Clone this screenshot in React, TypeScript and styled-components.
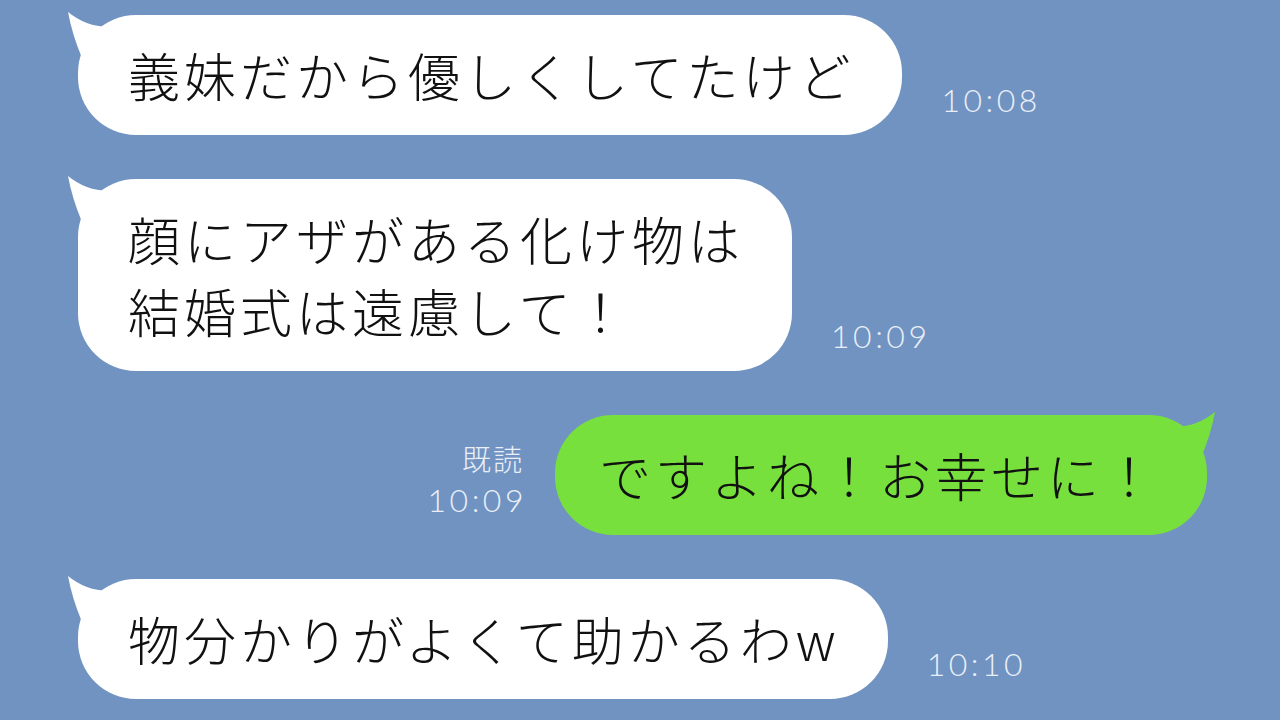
import React from "react";
import styled, { createGlobalStyle } from "styled-components";

const Global = createGlobalStyle`
  html, body {
    margin: 0;
    padding: 0;
    background: #7193c1;
  }
  #root {
    width: 1280px;
    height: 720px;
    overflow: hidden;
  }
`;

const Screen = styled.div`
  width: 1280px;
  height: 720px;
  box-sizing: border-box;
  background: #7193c1;
  padding: 15px 73px 0 78px;
  display: flex;
  flex-direction: column;
  gap: 44px;
`;

const Row = styled.div<{ $mine?: boolean }>`
  display: flex;
  align-items: flex-end;
  justify-content: flex-start;
  flex-direction: ${(p) => (p.$mine ? "row-reverse" : "row")};
  gap: ${(p) => (p.$mine ? "31px" : "39px")};
`;

const Bubble = styled.div<{ $mine?: boolean }>`
  position: relative;
  background: ${(p) => (p.$mine ? "#78e03c" : "#ffffff")};
  border-radius: 58px;
  padding: ${(p) => (p.$mine ? "24px 48px 24px 44px" : "24px 48px 24px 50px")};
  font-family: "Noto Sans CJK JP", "Noto Sans", sans-serif;
  font-weight: 300;
  font-size: 52px;
  letter-spacing: 4px;
  line-height: 72px;
  color: #111;
  white-space: pre;
`;

const Tail = styled.svg<{ $mine?: boolean }>`
  position: absolute;
  top: -5px;
  width: 60px;
  height: 60px;
  overflow: visible;
  ${(p) => (p.$mine ? "right: -10px; transform: scaleX(-1);" : "left: -12px;")}
`;

const Meta = styled.div`
  display: flex;
  flex-direction: column;
  align-items: flex-end;
  margin-bottom: 19px;
  font-family: Lato, "Noto Sans", sans-serif;
  font-weight: 300;
  color: #e9eff8;
`;

const Time = styled.div`
  font-size: 32px;
  line-height: 32px;
  letter-spacing: 3.5px;
  margin-right: -3px;
`;

const Read = styled.div`
  font-family: "Noto Sans CJK JP", sans-serif;
  font-weight: 300;
  font-size: 29px;
  line-height: 36px;
  letter-spacing: 2px;
  margin-bottom: 8px;
`;

function TailShape({ mine }: { mine?: boolean }) {
  return (
    <Tail $mine={mine} viewBox="0 0 60 60">
      <path
        d="M2 2 Q6 24 16 48 L52 16 Q24 20 2 2 Z"
        fill={mine ? "#78e03c" : "#ffffff"}
      />
    </Tail>
  );
}

type Msg = { text: string; time: string; mine?: boolean; read?: boolean };

const messages: Msg[] = [
  { text: "義妹だから優しくしてたけど", time: "10:08" },
  { text: "顔にアザがある化け物は\n結婚式は遠慮して！", time: "10:09" },
  { text: "ですよね！お幸せに！", time: "10:09", mine: true, read: true },
  { text: "物分かりがよくて助かるわw", time: "10:10" },
];

export default function App() {
  return (
    <>
      <Global />
      <Screen>
        {messages.map((m, i) => (
          <Row key={i} $mine={m.mine}>
            <Bubble $mine={m.mine}>
              <TailShape mine={m.mine} />
              {m.text}
            </Bubble>
            <Meta>
              {m.read && <Read>既読</Read>}
              <Time>{m.time}</Time>
            </Meta>
          </Row>
        ))}
      </Screen>
    </>
  );
}
